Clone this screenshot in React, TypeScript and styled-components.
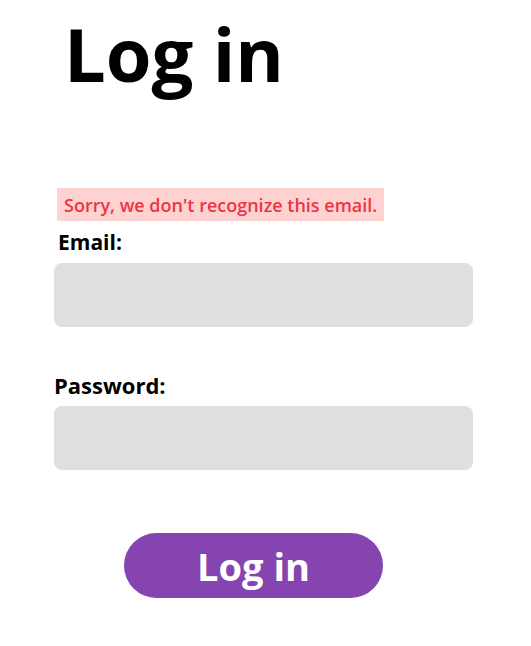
import React from 'react';
import styled, {createGlobalStyle} from 'styled-components';

const GlobalStyle = createGlobalStyle`
    html, body {
        margin: 0;
        padding: 0;
        background: #ffffff;
    }
    body {
        font-family: 'Open Sans', 'Noto Sans', sans-serif;
        color: #000000;
    }
`;

const Page = styled.div`
    width: 531px;
    height: 646px;
    box-sizing: border-box;
    padding: 0 58px 0 54px;
    display: flex;
    flex-direction: column;
`;

const Title = styled.h1`
    margin: 6px 0 0 10px;
    font-size: 74px;
    font-weight: 700;
    line-height: 96px;
    letter-spacing: 0;
`;

const ErrorBox = styled.div`
    align-self: flex-start;
    margin: 86px 0 0 3px;
    padding: 0 7px;
    height: 33px;
    display: flex;
    align-items: center;
    background: #ffd2d2;
    color: #ee3442;
    font-size: 18px;
    font-weight: 600;
`;

const Label = styled.label<{$indent?: number; $size: number}>`
    display: block;
    margin-left: ${(p) => p.$indent ?? 0}px;
    font-size: ${(p) => p.$size}px;
    font-weight: 700;
    line-height: 28px;
`;

const Field = styled.div<{$gap: number}>`
    display: flex;
    flex-direction: column;
    margin-top: ${(p) => p.$gap}px;
    gap: 7px;
`;

const Input = styled.input`
    height: 64px;
    border: none;
    border-radius: 8px;
    background: #dfdfdf;
    outline: none;
    padding: 0 16px;
    font-size: 18px;
    font-family: inherit;
`;

const SubmitButton = styled.button`
    align-self: flex-start;
    margin: 63px 0 0 70px;
    width: 259px;
    height: 65px;
    border: none;
    border-radius: 33px;
    background: #8644b1;
    color: #ffffff;
    font-family: inherit;
    font-size: 38px;
    font-weight: 700;
    cursor: pointer;
`;

export default function App() {
    return (
        <>
            <GlobalStyle/>
            <Page>
                <Title>{'Log in'}</Title>
                <ErrorBox>{"Sorry, we don't recognize this email."}</ErrorBox>
                <Field $gap={7}>
                    <Label $indent={4} $size={21}>{'Email:'}</Label>
                    <Input type='email'/>
                </Field>
                <Field $gap={44}>
                    <Label $size={22}>{'Password:'}</Label>
                    <Input type='password'/>
                </Field>
                <SubmitButton>{'Log in'}</SubmitButton>
            </Page>
        </>
    );
}
